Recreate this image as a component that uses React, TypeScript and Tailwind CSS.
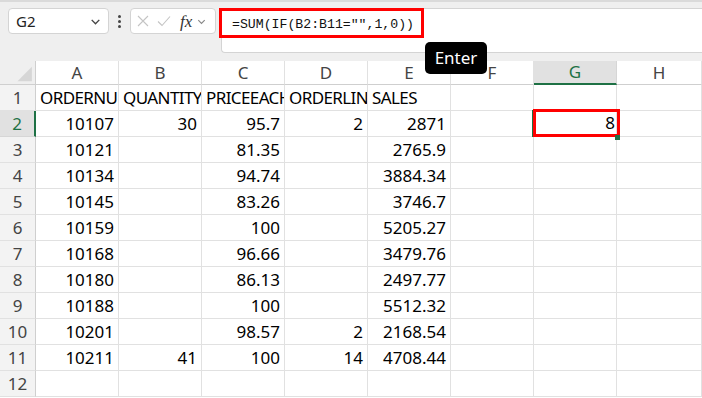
import React from 'react';

const cols = ['A', 'B', 'C', 'D', 'E', 'F', 'G', 'H'];

const headers = ['ORDERNUMBER', 'QUANTITYORDERED', 'PRICEEACH', 'ORDERLINENUMBER', 'SALES'];

const rows: (string | number)[][] = [
  [10107, 30, 95.7, 2, 2871],
  [10121, '', 81.35, '', 2765.9],
  [10134, '', 94.74, '', 3884.34],
  [10145, '', 83.26, '', 3746.7],
  [10159, '', 100, '', 5205.27],
  [10168, '', 96.66, '', 3479.76],
  [10180, '', 86.13, '', 2497.77],
  [10188, '', 100, '', 5512.32],
  [10201, '', 98.57, 2, 2168.54],
  [10211, 41, 100, 14, 4708.44],
];

const Chevron = ({ className }: { className?: string }) => (
  <svg viewBox="0 0 12 12" className={className} fill="none" stroke="currentColor" strokeWidth="1.3">
    <path d="M2.5 4.5 L6 8 L9.5 4.5" />
  </svg>
);

const FormulaBar = () => (
  <div className="relative h-[61px] bg-[#efefef] border-t-2 border-[#dadada]">
    <div className="flex items-start pt-[6px] pl-2 gap-0">
      {/* Name box */}
      <div className="w-[101px] h-[26px] bg-white border border-[#d4d4d4] rounded-[4px] flex items-center justify-between pl-[7px] pr-[6px] text-[15px] text-[#222]">
        <span>G2</span>
        <Chevron className="w-[13px] h-[13px] text-[#444]" />
      </div>
      {/* dots */}
      <div className="w-[21px] h-[26px] flex flex-col items-center justify-center gap-[2px]">
        <span className="w-[3px] h-[3px] bg-[#444] rounded-full" />
        <span className="w-[3px] h-[3px] bg-[#444] rounded-full" />
        <span className="w-[3px] h-[3px] bg-[#444] rounded-full" />
      </div>
      {/* function box */}
      <div className="w-[86px] h-[26px] bg-white border border-[#d4d4d4] rounded-[4px] flex items-center pl-[6px] gap-[8px]">
        <svg viewBox="0 0 12 12" className="w-[12px] h-[12px] text-[#c4c4c4]" fill="none" stroke="currentColor" strokeWidth="1.1">
          <path d="M1 1 L11 11 M11 1 L1 11" />
        </svg>
        <svg viewBox="0 0 14 12" className="w-[14px] h-[12px] text-[#c4c4c4]" fill="none" stroke="currentColor" strokeWidth="1.1">
          <path d="M1 6.5 L5 10.5 L13 1.5" />
        </svg>
        <span className="italic text-[17px] leading-none text-[#333] ml-[1px]" style={{ fontFamily: '"Liberation Serif", serif' }}>fx</span>
        <Chevron className="w-[11px] h-[11px] text-[#888] -ml-[4px]" />
      </div>
      {/* formula input */}
      <div className="relative ml-[5px] flex-1 h-[45px] bg-white border border-[#d4d4d4] border-r-0 rounded-l-[4px]">
        <div className="absolute -left-[3px] -top-[1px] w-[205px] h-[30px] border-[3px] border-[#ff0000]" />
        <div className="pl-[10px] pt-[6px] text-[13.2px] text-[#111]" style={{ fontFamily: '"Liberation Mono", monospace' }}>
          =SUM(IF(B2:B11="",1,0))
        </div>
      </div>
    </div>
    <div className="absolute left-[425px] top-[40px] w-[62px] h-[32px] bg-black rounded-[5px] flex items-center justify-center text-white text-[17px] z-10">
      Enter
    </div>
  </div>
);

const Grid = () => (
  <div className="grid grid-cols-[36px_repeat(7,83px)_85px] bg-white text-[17px] text-black">
    {/* header row */}
    <div className="h-[24px] bg-[#efefef] border-r border-b border-[#cfcfcf] relative overflow-hidden">
      <svg viewBox="0 0 36 24" className="absolute inset-0 w-full h-full">
        <polygon points="33,6 33,21 18,21" fill="#d6d6d6" />
      </svg>
    </div>
    {cols.map((c) => (
      <div
        key={c}
        className={
          c === 'G'
            ? 'h-[24px] bg-[#e1e1e1] text-[#1e7145] border-r border-[#d6d6d6] border-b-2 border-b-[#1e7145] flex items-center justify-center'
            : 'h-[24px] bg-white text-[#444] border-r border-b border-[#e1e1e1] border-b-[#cfcfcf] flex items-center justify-center'
        }
      >
        {c}
      </div>
    ))}

    {/* rows */}
    {Array.from({ length: 12 }).map((_, r) => {
      const rowNum = r + 1;
      const selected = rowNum === 2;
      const data: (string | number)[] =
        rowNum === 1 ? headers : rowNum <= 11 ? rows[r - 1] : ['', '', '', '', ''];
      return (
        <React.Fragment key={rowNum}>
          <div
            className={
              selected
                ? 'h-[26px] bg-[#e1e1e1] text-[#1e7145] border-b border-[#d6d6d6] border-r-2 border-r-[#1e7145] flex items-center justify-center'
                : 'h-[26px] bg-[#f3f3f3] text-[#444] border-b border-[#e1e1e1] border-r border-r-[#cfcfcf] flex items-center justify-center'
            }
          >
            {rowNum}
          </div>
          {cols.map((c, ci) => {
            const v = ci < 5 ? data[ci] : '';
            const isText = rowNum === 1;
            if (c === 'G' && selected) {
              return (
                <div key={c} className="relative h-[26px] border-r border-b border-[#e1e1e1]">
                  <div className="absolute -left-[1px] -top-[2px] w-[87px] h-[28px] border-[3px] border-[#ff0000] flex items-center justify-end pr-[2px] z-10">
                    8
                  </div>
                  <div className="absolute -left-[2px] top-[-1px] w-[2px] h-[27px] bg-[#1e7145]" />
                  <div className="absolute right-[-4px] bottom-[-4px] w-[5px] h-[5px] bg-[#1e7145] z-20" />
                </div>
              );
            }
            return (
              <div
                key={c}
                className={
                  'h-[26px] border-r border-b border-[#e1e1e1] flex items-center overflow-hidden whitespace-nowrap ' +
                  (isText ? 'justify-start pl-[4px] tracking-[-0.6px]' : 'justify-end pr-[4px]')
                }
              >
                {v}
              </div>
            );
          })}
        </React.Fragment>
      );
    })}
  </div>
);

export default function App() {
  return (
    <div className="w-[702px] h-[398px] overflow-hidden bg-white" style={{ fontFamily: '"Noto Sans", "Open Sans", sans-serif' }}>
      <FormulaBar />
      <Grid />
    </div>
  );
}
